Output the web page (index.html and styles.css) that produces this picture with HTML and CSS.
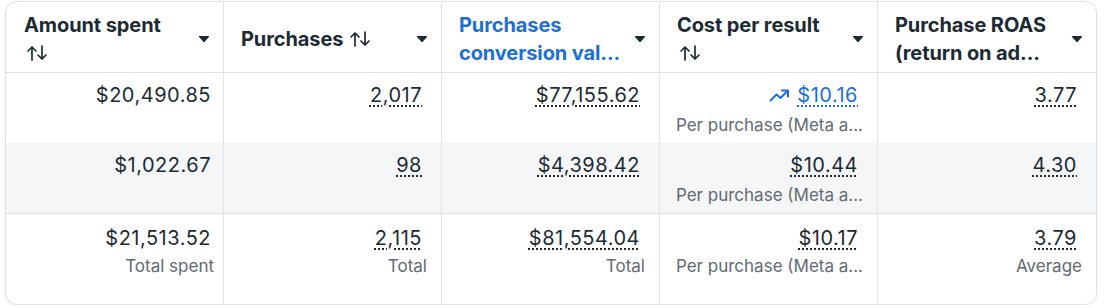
FILE: index.html
```html
<!DOCTYPE html>
<html lang="en">
<head>
<meta charset="utf-8">
<title>Ads table</title>
<link rel="stylesheet" href="styles.css">
</head>
<body>
<div class="card">
  <div class="row head">
    <div class="hcell">
      <div class="htext">
        <span class="hline">Amount spent</span>
        <span class="hline"><svg class="sort" viewBox="0 0 22 16" width="22" height="16"><path d="M6 15V2M2 6l4-4 4 4M16 1v13M12 10l4 4 4-4"/></svg></span>
      </div>
      <svg class="caret" viewBox="0 0 12 8" width="12" height="8"><path d="M1.5 1.5h9L6 6.5z"/></svg>
    </div>
    <div class="hcell">
      <div class="htext">
        <span class="hline">Purchases <svg class="sort" viewBox="0 0 22 16" width="22" height="16"><path d="M6 15V2M2 6l4-4 4 4M16 1v13M12 10l4 4 4-4"/></svg></span>
      </div>
      <svg class="caret" viewBox="0 0 12 8" width="12" height="8"><path d="M1.5 1.5h9L6 6.5z"/></svg>
    </div>
    <div class="hcell">
      <div class="htext blue">
        <span class="hline">Purchases</span>
        <span class="hline">conversion val...</span>
      </div>
      <svg class="caret" viewBox="0 0 12 8" width="12" height="8"><path d="M1.5 1.5h9L6 6.5z"/></svg>
    </div>
    <div class="hcell">
      <div class="htext">
        <span class="hline">Cost per result</span>
        <span class="hline"><svg class="sort" viewBox="0 0 22 16" width="22" height="16"><path d="M6 15V2M2 6l4-4 4 4M16 1v13M12 10l4 4 4-4"/></svg></span>
      </div>
      <svg class="caret" viewBox="0 0 12 8" width="12" height="8"><path d="M1.5 1.5h9L6 6.5z"/></svg>
    </div>
    <div class="hcell">
      <div class="htext">
        <span class="hline">Purchase ROAS</span>
        <span class="hline">(return on ad...</span>
      </div>
      <svg class="caret" viewBox="0 0 12 8" width="12" height="8"><path d="M1.5 1.5h9L6 6.5z"/></svg>
    </div>
  </div>

  <div class="row data">
    <div class="cell"><span class="val plain">$20,490.85</span></div>
    <div class="cell"><span class="val">2,017</span></div>
    <div class="cell"><span class="val">$77,155.62</span></div>
    <div class="cell">
      <span class="val-wrap"><svg class="trend" viewBox="0 0 22 14" width="22" height="14"><path d="M1.5 12.5l6-6 4 3.5 7.5-7.5M13 2.5h6v6"/></svg><span class="val blue">$10.16</span></span>
      <span class="sub">Per purchase (Meta a...</span>
    </div>
    <div class="cell"><span class="val">3.77</span></div>
  </div>

  <div class="row data alt">
    <div class="cell"><span class="val plain">$1,022.67</span></div>
    <div class="cell"><span class="val">98</span></div>
    <div class="cell"><span class="val">$4,398.42</span></div>
    <div class="cell">
      <span class="val">$10.44</span>
      <span class="sub">Per purchase (Meta a...</span>
    </div>
    <div class="cell"><span class="val">4.30</span></div>
  </div>

  <div class="row total">
    <div class="cell"><span class="val plain">$21,513.52</span><span class="sub">Total spent</span></div>
    <div class="cell"><span class="val">2,115</span><span class="sub">Total</span></div>
    <div class="cell"><span class="val">$81,554.04</span><span class="sub">Total</span></div>
    <div class="cell"><span class="val">$10.17</span><span class="sub">Per purchase (Meta a...</span></div>
    <div class="cell"><span class="val">3.79</span><span class="sub">Average</span></div>
  </div>
</div>
</body>
</html>
```

FILE: styles.css
```css
* { box-sizing: border-box; }

body {
  margin: 0;
  background: #ffffff;
  font-family: Inter, "Noto Sans", sans-serif;
  color: #1c2b33;
}

.card {
  margin: 1px 0 0 5px;
  width: 1092px;
  height: 304px;
  border: 1px solid #dfe1e5;
  border-radius: 12px;
  overflow: hidden;
  box-shadow: 0 1px 3px rgba(0, 0, 0, 0.08);
  display: flex;
  flex-direction: column;
}

.row {
  display: grid;
  grid-template-columns: repeat(5, 1fr);
}

.head {
  height: 71px;
  border-bottom: 1px solid #dcdfe3;
}

.hcell {
  display: flex;
  align-items: center;
  padding: 8px 13px 4px 17px;
  border-right: 1px solid #e1e3e7;
}

.hcell:first-child { padding-left: 18px; }
.hcell:last-child, .cell:last-child { border-right: none; }

.htext {
  flex: 1;
  display: flex;
  flex-direction: column;
  font-size: 20px;
  font-weight: 700;
  line-height: 28px;
  letter-spacing: -0.1px;
  white-space: nowrap;
}

.hline {
  display: flex;
  align-items: center;
  gap: 4px;
  height: 28px;
}

.htext.blue { color: #1b6fd6; }

.sort {
  fill: none;
  stroke: #1c2b33;
  stroke-width: 1.7;
  stroke-linecap: round;
  stroke-linejoin: round;
  margin-left: 2px;
}

.caret {
  fill: #1c2b33;
  stroke: #1c2b33;
  stroke-width: 1.2;
  stroke-linejoin: round;
  flex: none;
}

.data { height: 70px; }
.alt { background: #f5f6f8; }

.total {
  flex: 1;
  border-top: 1px solid #dcdfe3;
}

.cell {
  display: flex;
  flex-direction: column;
  align-items: flex-end;
  padding: 10px 14px 0 8px;
  border-right: 1px solid #e1e3e7;
}

.cell:first-child { padding-right: 9px; }

.total .cell { padding-top: 12px; }

.val {
  font-size: 20px;
  line-height: 24px;
  letter-spacing: 0.5px;
  margin-right: 5px;
  text-decoration: underline dotted #1c2b33;
  text-decoration-thickness: 1.5px;
  text-underline-offset: 3px;
  white-space: nowrap;
}

.cell:first-child .val { margin-right: 3px; }

.val.plain { text-decoration: none; }

.val.blue {
  color: #1b6fd6;
  text-decoration-color: #1b6fd6;
  margin-right: 0;
}

.val-wrap {
  display: flex;
  align-items: center;
  gap: 6px;
  margin-right: 5px;
}

.trend {
  fill: none;
  stroke: #1b6fd6;
  stroke-width: 2;
  stroke-linecap: round;
  stroke-linejoin: round;
}

.sub {
  font-size: 17px;
  line-height: 24px;
  margin-top: 6px;
  color: #626a73;
  white-space: nowrap;
}

.total .sub { margin-top: 4px; }
```
